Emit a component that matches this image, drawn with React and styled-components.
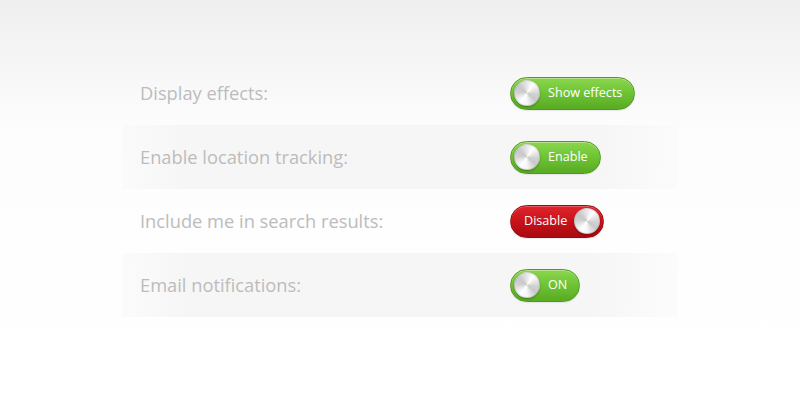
import React from "react";
import styled, { createGlobalStyle, css } from "styled-components";

const Global = createGlobalStyle`
  html, body { margin: 0; padding: 0; }
  body {
    width: 800px;
    height: 400px;
    overflow: hidden;
    background: linear-gradient(to bottom, #efefef 0px, #fdfdfd 130px, #ffffff 400px);
    font-family: "Open Sans", "Noto Sans", sans-serif;
  }
`;

const Page = styled.div`
  padding-top: 61px;
  display: flex;
  flex-direction: column;
  align-items: center;
`;

const List = styled.div`
  width: 556px;
  display: flex;
  flex-direction: column;
`;

const Row = styled.div`
  height: 64px;
  display: flex;
  align-items: center;
  padding-left: 18px;
  ${(p) =>
    p.$shaded &&
    css`
      background: linear-gradient(
        to right,
        rgba(246, 246, 246, 0.4) 0%,
        #f6f6f6 12%,
        #f6f6f6 85%,
        rgba(246, 246, 246, 0.3) 100%
      );
    `}
`;

const Label = styled.div`
  width: 370px;
  font-size: 18.3px;
  color: #bcbcbc;
  margin-top: -2px;
`;

const Toggle = styled.div`
  box-sizing: border-box;
  height: 33px;
  border-radius: 17px;
  display: flex;
  align-items: center;
  gap: ${(p) => (p.$on ? "8px" : "7px")};
  padding: ${(p) => (p.$on ? "0 12px 0 3px" : "0 3px 0 13px")};
  flex-direction: ${(p) => (p.$on ? "row" : "row-reverse")};
  color: #fff;
  font-size: 12.6px;
  ${(p) =>
    p.$on
      ? css`
          background: linear-gradient(to bottom, #8ad64e 0%, #70c536 45%, #58ab22 100%);
          border: 1px solid #4f9c1d;
          box-shadow: inset 0 1px 0 rgba(255, 255, 255, 0.35), 0 1px 1px rgba(0, 0, 0, 0.08);
        `
      : css`
          background: linear-gradient(to bottom, #e0242c 0%, #c8121a 50%, #a90a11 100%);
          border: 1px solid #9c0a10;
          box-shadow: inset 0 1px 0 rgba(255, 255, 255, 0.25), 0 1px 1px rgba(0, 0, 0, 0.08);
        `}
`;

const Knob = styled.div`
  box-sizing: border-box;
  width: 26px;
  height: 26px;
  border-radius: 50%;
  flex: none;
  border: 1px solid rgba(140, 140, 140, 0.3);
  background: conic-gradient(
    from 0deg,
    #e8e8e8 0deg,
    #ffffff 35deg,
    #d2d2d2 95deg,
    #c9c9c9 130deg,
    #f6f6f6 180deg,
    #ffffff 215deg,
    #d0d0d0 275deg,
    #c8c8c8 310deg,
    #e8e8e8 360deg
  );
  box-shadow: 0 1px 2px rgba(0, 0, 0, 0.3);
`;

const Text = styled.span`
  line-height: 1;
  white-space: nowrap;
`;

const rows = [
  { label: "Display effects:", text: "Show effects", on: true },
  { label: "Enable location tracking:", text: "Enable", on: true },
  { label: "Include me in search results:", text: "Disable", on: false },
  { label: "Email notifications:", text: "ON", on: true },
];

export default function App() {
  return (
    <>
      <Global />
      <Page>
        <List>
          {rows.map((r, i) => (
            <Row key={r.label} $shaded={i % 2 === 1}>
              <Label>{r.label}</Label>
              <Toggle $on={r.on}>
                <Knob />
                <Text>{r.text}</Text>
              </Toggle>
            </Row>
          ))}
        </List>
      </Page>
    </>
  );
}
